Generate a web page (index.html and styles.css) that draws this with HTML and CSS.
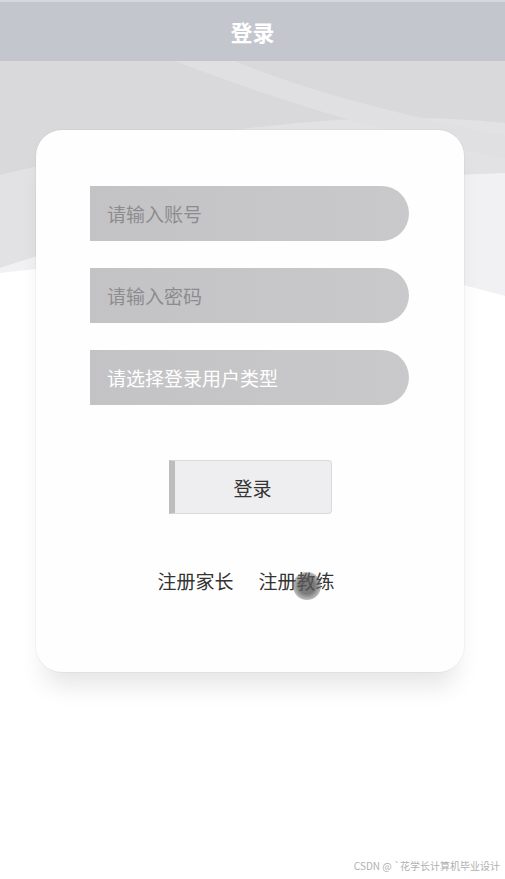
FILE: index.html
```html
<!DOCTYPE html>
<html>
<head>
    <title>登录</title>
    <link rel="stylesheet" href="styles.css">
</head>
<body>
    <div class="topbar">登录</div>

    <div class="stage">
        <div class="card">
            <div class="field">请输入账号</div>
            <div class="field">请输入密码</div>
            <div class="field field-select">请选择登录用户类型</div>

            <div class="btn-wrap">
                <button class="login-btn">登录</button>
            </div>

            <div class="links">
                <span class="link">注册家长</span>
                <span class="link link-touch">注册教练<i class="touch"></i></span>
            </div>
        </div>
    </div>

    <div class="watermark">CSDN @ `花学长计算机毕业设计</div>
</body>
</html>
```

FILE: styles.css
```css
body {
    margin: 0;
    font-family: "Noto Sans CJK SC", "Noto Sans", sans-serif;
    background: #fff;
    color: #333;
    height: 879px;
    position: relative;
    overflow: hidden;
}
.topbar {
    height: 59px;
    border-top: 2px solid #d6d8de;
    background: #c4c6cd;
    color: #fff;
    font-size: 22px;
    font-weight: bold;
    text-align: center;
    line-height: 58px;
}
.stage {
    padding: 69px 0 40px;
    background: url("data:image/svg+xml,%3Csvg xmlns='http://www.w3.org/2000/svg' width='505' height='250' viewBox='0 0 505 250' preserveAspectRatio='none'%3E%3Cpath d='M0 0H505V235Q300 175 0 212Z' fill='%23f1f1f3'/%3E%3Cpath d='M0 0H505V112Q260 120 0 207Z' fill='%23e2e2e4'/%3E%3Cpath d='M0 0H505V62Q300 40 0 114Z' fill='%23d9d9db'/%3E%3Cpath d='M175 0H235Q330 40 505 75V98Q330 60 175 0Z' fill='%23e0e0e2'/%3E%3C/svg%3E") no-repeat top left / 505px 250px;
}
.card {
    margin: 0 41px 0 36px;
    height: 486px;
    padding-top: 56px;
    background: #fefefe;
    border-radius: 26px;
    box-shadow: 0 0 0 1px rgba(0, 0, 0, 0.03), 0 22px 24px -8px rgba(0, 0, 0, 0.1);
}
.field {
    margin: 0 0 27px 54px;
    width: 302px;
    height: 55px;
    padding-left: 17px;
    border-radius: 0 28px 28px 0;
    background: linear-gradient(90deg, #c3c3c5, #c9c9cb);
    color: #8c8c8e;
    font-size: 19px;
    line-height: 55px;
}
.field-select {
    color: #fff;
}
.btn-wrap {
    display: flex;
    justify-content: center;
    margin-top: 55px;
}
.login-btn {
    width: 163px;
    height: 54px;
    border: 1px solid #dadadc;
    border-left: 6px solid #bdbdbd;
    border-radius: 0 4px 4px 0;
    background: #eeeef0;
    color: #333;
    font-family: inherit;
    font-size: 19px;
}
.links {
    display: flex;
    justify-content: center;
    gap: 25px;
    margin-top: 52px;
    padding-right: 8px;
    font-size: 19px;
    line-height: 30px;
    color: #333;
}
.link-touch {
    position: relative;
}
.touch {
    position: absolute;
    left: 34px;
    top: 6px;
    width: 28px;
    height: 28px;
    border-radius: 50%;
    background: radial-gradient(circle, rgba(90, 90, 90, 0.8) 40%, rgba(120, 120, 120, 0.4) 75%, rgba(150, 150, 150, 0) 100%);
}
.watermark {
    position: absolute;
    right: 5px;
    bottom: 6px;
    font-size: 10px;
    color: #b0b0b2;
}
```
